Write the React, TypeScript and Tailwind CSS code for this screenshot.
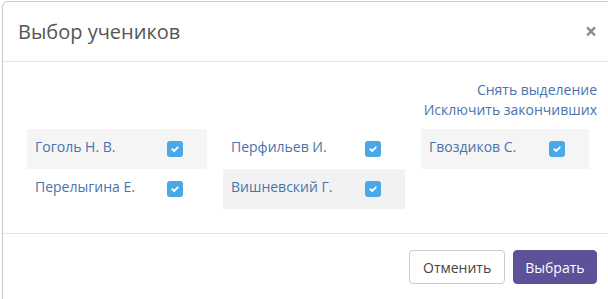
import React from "react";

type Student = { name: string; shaded?: "a" | "b" };

const columns: { width: string; items: Student[] }[] = [
  {
    width: "w-[180px]",
    items: [{ name: "Гоголь Н. В.", shaded: "a" }, { name: "Перелыгина Е." }],
  },
  {
    width: "w-[182px]",
    items: [{ name: "Перфильев И." }, { name: "Вишневский Г.", shaded: "b" }],
  },
  {
    width: "w-[168px]",
    items: [{ name: "Гвоздиков С.", shaded: "a" }],
  },
];

function CheckBox() {
  return (
    <span className="flex h-4 w-4 items-center justify-center rounded-[3px] bg-[#4aa8e8]">
      <svg width="10" height="10" viewBox="0 0 10 10">
        <path d="M2.2 5.2l1.9 1.8L7.8 3.3" fill="none" stroke="#fff" strokeWidth="1.8" strokeLinecap="round" strokeLinejoin="round" />
      </svg>
    </span>
  );
}

export default function App() {
  return (
    <div
      className="h-[299px] w-[608px] overflow-hidden bg-white pl-[2px] pt-[1px]"
      style={{ fontFamily: '"Open Sans", "Noto Sans", sans-serif' }}
    >
      <div className="w-[620px] rounded-tl-[6px] border border-[#c8c8c8] bg-white">
        <div className="flex h-[60px] items-center justify-between border-b border-[#e5e5e5] pl-[15px] pr-[24px]">
          <h4 className="text-[20px] leading-[30px] text-[#555]">Выбор учеников</h4>
          <span className="text-[21px] font-bold leading-none text-[#8a8a8a]">×</span>
        </div>

        <div className="border-b border-[#e5e5e5] pb-[24px] pl-[24px] pr-[24px] pt-[18px]">
          <div className="flex flex-col items-end text-[14px] leading-[20px] text-[#4a72ad]">
            <a>Снять выделение</a>
            <a>Исключить закончивших</a>
          </div>
          <div className="mt-[9px] flex gap-[16px]">
            {columns.map((col, i) => (
              <div key={i} className={`flex flex-col ${col.width}`}>
                {col.items.map((s) => (
                  <div
                    key={s.name}
                    className={`flex h-[40px] items-center justify-between pl-[8px] pr-[24px] ${
                      s.shaded === "a" ? "bg-[#f5f5f5]" : s.shaded === "b" ? "bg-[#f2f2f2]" : ""
                    }`}
                  >
                    <span className="mb-[4px] text-[14px] leading-[20px] text-[#4a72ad]">{s.name}</span>
                    <CheckBox />
                  </div>
                ))}
              </div>
            ))}
          </div>
        </div>

        <div className="flex justify-start gap-[8px] pl-[406px] pt-[16px] pb-[15px]">
          <button className="h-[34px] rounded-[4px] border border-[#ccc] bg-white px-[13px] text-[14px] text-[#444]">
            Отменить
          </button>
          <button className="h-[34px] rounded-[4px] border border-[#5d519a] bg-[#5d519a] px-[11px] text-[14px] text-white">
            Выбрать
          </button>
        </div>
      </div>
    </div>
  );
}
